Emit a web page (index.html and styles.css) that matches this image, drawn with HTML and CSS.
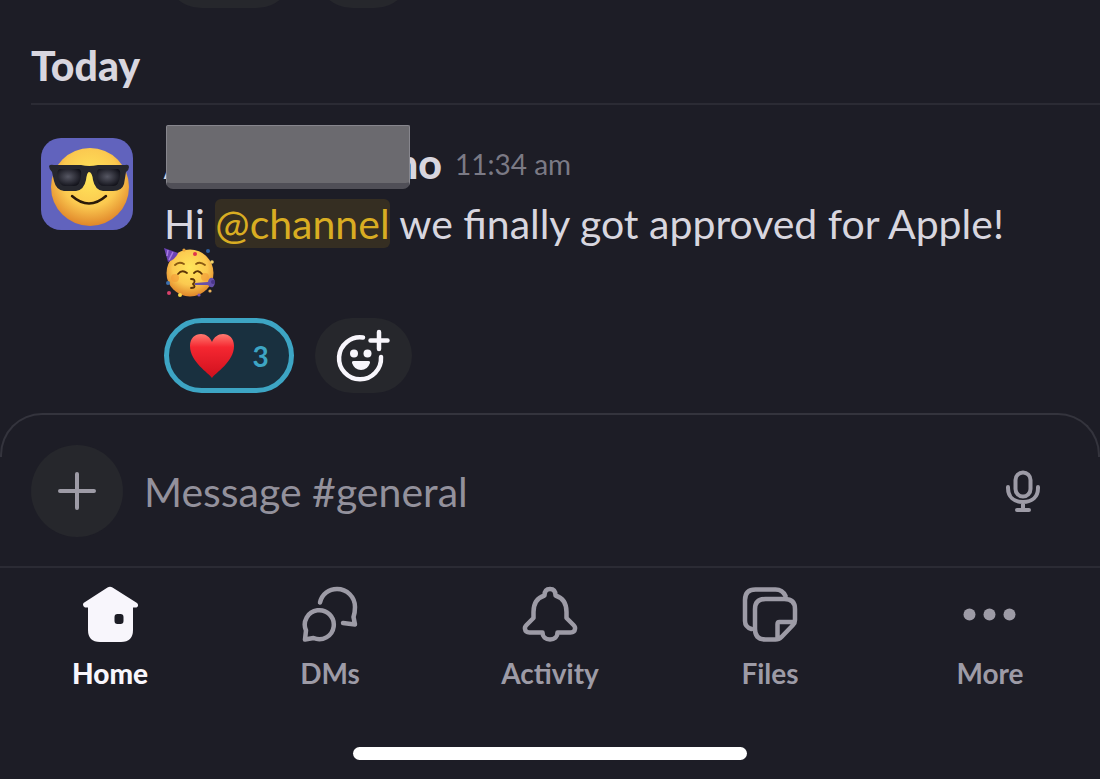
FILE: index.html
```html
<!DOCTYPE html>
<html lang="en">
  <head>
    <meta charset="UTF-8">
    <meta name="viewport" content="width=device-width, initial-scale=1">
    <title>#general</title>
    <link rel="stylesheet" href="styles.css">
  </head>
  <body>
    <main class="history">
      <div class="previous">
        <span class="pill pill-wide"></span>
        <span class="pill pill-add"></span>
      </div>

      <h2 class="day">Today</h2>

      <article class="message">
        <svg class="avatar" viewBox="0 0 92 92" role="img" aria-label="Avatar">
          <defs>
            <radialGradient id="face" cx="50%" cy="38%" r="62%">
              <stop offset="0" stop-color="#ffe65a"/>
              <stop offset="0.6" stop-color="#fbc950"/>
              <stop offset="1" stop-color="#e0862a"/>
            </radialGradient>
            <radialGradient id="lens" cx="45%" cy="45%" r="60%">
              <stop offset="0" stop-color="#565763"/>
              <stop offset="1" stop-color="#12121a"/>
            </radialGradient>
          </defs>
          <rect width="92" height="92" fill="#6163bd"/>
          <circle cx="49" cy="49" r="39" fill="url(#face)"/>
          <path d="M8 28 Q9 26 13 27 L40 27 Q48 29 57 27 L84 27 Q88 26 88 29 Q88 32 85 34 L83 46 Q81 53 72 53 L62 53 Q54 52 52 42 Q51 34 48 34 Q46 34 45 42 Q43 52 35 53 L23 53 Q15 52 13 43 L11 34 Q8 31 8 28 Z" fill="#26272e"/>
          <path d="M19 31 H38 Q41 32 40 38 Q39 48 33 48 H24 Q19 48 17 40 Q15 32 19 31 Z" fill="url(#lens)"/>
          <path d="M58 31 H77 Q80 32 79 38 Q78 48 72 48 H63 Q57 48 56 40 Q55 32 58 31 Z" fill="url(#lens)"/>
          <path d="M31 58 Q48 73 65 58" fill="none" stroke="#2b1a08" stroke-width="2.4" stroke-linecap="round"/>
        </svg>

        <div class="content">
          <header class="byline">
            <span class="author"><span>A</span><span>no</span><span class="redacted"></span></span>
            <time class="time">11:34 am</time>
          </header>

          <p class="text">Hi <a class="mention" href="#channel">@channel</a> we finally got approved for Apple!
            <svg class="emoji" viewBox="0 0 52 50" role="img" aria-label="Partying face">
              <circle cx="26" cy="25" r="23.5" fill="url(#face)"/>
              <path d="M0 0 L14 5 Q12 11 4 14 Z" fill="#6c43b5"/>
              <path d="M4 2 L3 8 M9 4 L5 12" stroke="#a77be0" stroke-width="1.5"/>
              <path d="M11 17 Q15 13 20 16 M32 16 Q36 13 41 17" fill="none" stroke="#8a5a12" stroke-width="1.8" stroke-linecap="round"/>
              <path d="M14 26 Q18 21 23 25 M30 25 Q34 21 38 26" fill="none" stroke="#5b3307" stroke-width="1.8" stroke-linecap="round"/>
              <circle cx="11" cy="30" r="4" fill="#f49a35" opacity="0.6"/>
              <circle cx="41" cy="29" r="4" fill="#f49a35" opacity="0.6"/>
              <path d="M27 31 Q32 31 30 35 Q28 36 30 37 Q32 40 27 40" fill="none" stroke="#5b3307" stroke-width="1.8" stroke-linecap="round"/>
              <path d="M31 35 L44 34 Q45 29 49 30 Q53 34 49 39 Q46 40 44 37 L31 37 Z" fill="#6650ab"/>
              <circle cx="49" cy="34" r="2" fill="#4a368a"/>
              <circle cx="20" cy="2" r="1.6" fill="#e8a33a"/>
              <circle cx="31" cy="6" r="2" fill="#e0344c"/>
              <circle cx="44" cy="3" r="2" fill="#2e5f9e"/>
              <circle cx="48" cy="14" r="1.8" fill="#f2d36b"/>
              <circle cx="4" cy="35" r="2" fill="#3c6fae"/>
              <circle cx="5" cy="45" r="2" fill="#d9416b"/>
              <circle cx="16" cy="47" r="2" fill="#f5d54a"/>
              <circle cx="35" cy="47" r="1.6" fill="#7a58b0"/>
              <circle cx="46" cy="43" r="1.6" fill="#eeb55c"/>
            </svg>
          </p>

          <div class="reactions">
            <button class="pill pill-wide pill-active" type="button" aria-label="Heart, 3 reactions">
              <svg class="heart" viewBox="0 0 46 46" aria-hidden="true">
                <defs>
                  <linearGradient id="heart" x1="0" y1="0" x2="0" y2="1">
                    <stop offset="0" stop-color="#ff7a70"/>
                    <stop offset="0.3" stop-color="#f52731"/>
                    <stop offset="1" stop-color="#cf101d"/>
                  </linearGradient>
                </defs>
                <path d="M23 45 C20 40 1 29 1 13 C1 5 6 1 12 1 C17 1 21 4 23 9 C25 4 29 1 34 1 C40 1 45 5 45 13 C45 29 26 40 23 45 Z" fill="url(#heart)"/>
              </svg>
              <span>3</span>
            </button>
            <button class="pill pill-add" type="button" aria-label="Add reaction">
              <svg class="icon" viewBox="0 0 56 56" aria-hidden="true">
                <path d="M27 9.500 A21 21 0 1 0 45 29 M43 4 V21 M34.500 12.500 H51.500" stroke-width="4.5"/>
                <circle class="fill" cx="18" cy="25.500" r="4"/>
                <circle class="fill" cx="31.500" cy="25.500" r="4"/>
                <path class="fill" d="M17.500 33 H32.500 Q34.500 33 34 35 Q31.500 42 25 42 Q18.500 42 16 35 Q15.500 33 17.500 33 Z"/>
              </svg>
            </button>
          </div>
        </div>
      </article>
    </main>

    <form class="composer">
      <button class="attach" type="button" aria-label="Attach">
        <svg class="icon" viewBox="0 0 56 56" aria-hidden="true">
          <path d="M28 11 V45 M11 28 H45" stroke-width="4"/>
        </svg>
      </button>
      <input class="field" type="text" aria-label="Message #general" placeholder="Message #general">
      <button class="mic" type="button" aria-label="Record audio">
        <svg class="icon" viewBox="0 0 56 56" aria-hidden="true">
          <rect x="20.500" y="9.500" width="15" height="24" rx="7.500" stroke-width="4"/>
          <path d="M13 24 V25 C13 34 19 39 28 39 C37 39 43 34 43 25 V24 M28 39 V46 M22 47 H34" stroke-width="4"/>
        </svg>
      </button>
    </form>

    <nav class="tabs">
      <a class="tab tab-active" href="#home">
        <svg class="icon" viewBox="0 0 56 56" aria-hidden="true">
          <path class="fill" fill-rule="evenodd" d="M25.500 1.500 Q28 0 30.500 1.500 L55 17 Q57.500 20 54.500 21.500 H51 V44 Q51 56 39 56 H18 Q6 56 6 44 V21.500 H3 Q0 20 1.500 17 Z M35.500 28 Q32.500 28 32.500 31 V35 Q32.500 38 35.500 38 H38.500 Q41.500 38 41.500 35 V31 Q41.500 28 38.500 28 Z"/>
        </svg>
        <span>Home</span>
      </a>
      <a class="tab" href="#dms">
        <svg class="icon" viewBox="0 0 56 56" aria-hidden="true">
          <path d="M18 16.500 C20 8 27 3 35 3 C45 3 53 11 53 21 C53 25 52.500 28 51.500 31 L53 38.500 L41 37"/>
          <path d="M3 53.500 L4 44.500 A14.500 14.500 0 1 1 11.500 52 Z"/>
        </svg>
        <span>DMs</span>
      </a>
      <a class="tab" href="#activity">
        <svg class="icon" viewBox="0 0 56 56" aria-hidden="true">
          <path d="M22.500 9.500 C22.500 5 24.500 3 28 3 C31.500 3 33.500 5 33.500 9.500 C41.500 12 44.500 18 44.500 26 V32 L51.500 39 Q53.500 41 53 43 Q52.500 46.500 48.500 46.500 H35.500 C35.500 51 32.500 53.500 28 53.500 C23.500 53.500 20.500 51 20.500 46.500 H7.500 Q3.500 46.500 3 43 Q2.500 41 4.500 39 L11.500 32 V26 C11.500 18 14.500 12 22.500 9.500 Z"/>
        </svg>
        <span>Activity</span>
      </a>
      <a class="tab" href="#files">
        <svg class="icon" viewBox="0 0 56 56" aria-hidden="true">
          <path d="M9.500 43 Q3 41 3 35 V14 Q3 3.500 13.500 3.500 H33.500 Q40.500 3.500 43.500 10"/>
          <path d="M23.500 13 H42.500 Q53 13 53 23 V34 Q53 37 51 39 L39.500 51 Q37 53.500 33.500 53.500 H23.500 Q13 53.500 13 43 V23 Q13 13 23.500 13 Z M52.500 36 H37.500 Q35.500 36 35.500 38 V53"/>
        </svg>
        <span>Files</span>
      </a>
      <a class="tab" href="#more">
        <svg class="icon" viewBox="0 0 56 56" aria-hidden="true">
          <circle class="fill" cx="7.500" cy="28.500" r="6"/>
          <circle class="fill" cx="27.500" cy="28.500" r="6"/>
          <circle class="fill" cx="47.500" cy="28.500" r="6"/>
        </svg>
        <span>More</span>
      </a>
    </nav>

    <div class="home-indicator"></div>
  </body>
</html>
```

FILE: styles.css
```css
* {
  box-sizing: border-box;
}

body {
  margin: 0;
  background: #1d1d26;
  color: #d8d6df;
  font-family: Lato, "Liberation Sans", sans-serif;
  font-size: 41px;
}

button {
  border: 0;
  padding: 0;
  color: inherit;
  font: inherit;
}

.icon {
  display: block;
  width: 56px;
  height: 56px;
  fill: none;
  stroke: currentColor;
  stroke-width: 4.5;
  stroke-linecap: round;
  stroke-linejoin: round;
}

.icon .fill {
  fill: currentColor;
  stroke: none;
}

/* bottom edge of the reactions on the message above */
.previous {
  display: flex;
  align-items: flex-end;
  gap: 21px;
  height: 8px;
  padding-left: 164px;
  overflow: hidden;
}

.day {
  margin: 33px 0 0 31px;
  padding-bottom: 12px;
  border-bottom: 2px solid #2b2b34;
  font-size: 41px;
  font-weight: 900;
  line-height: 50px;
}

.message {
  display: flex;
  gap: 31px;
  padding: 33px 41px 20px;
}

.avatar {
  flex: none;
  width: 92px;
  height: 92px;
  border-radius: 20px;
}

.content {
  flex: 1;
  min-width: 0;
}

.byline {
  display: flex;
  align-items: center;
  gap: 13px;
  padding-top: 2px;
  line-height: 48px;
}

.author {
  position: relative;
  display: flex;
  justify-content: space-between;
  width: 278px;
  font-weight: 900;
}

/* grey block over the name, with a darker bevel along the bottom */
.redacted {
  position: absolute;
  top: -15px;
  left: 2px;
  width: 244px;
  height: 64px;
  border: 1px solid #87868d;
  border-bottom: 6px solid #504f57;
  border-radius: 2px 2px 7px 7px;
  background: #6b6a6f;
}

.time {
  color: #7b7a85;
  font-size: 28px;
}

.text {
  margin: 12px 0 0;
  line-height: 48px;
}

.mention {
  border-radius: 6px;
  background: #352e22;
  color: #d9ad22;
  text-decoration: none;
}

.emoji {
  display: block;
  width: 52px;
  height: 50px;
}

.reactions {
  display: flex;
  gap: 21px;
  margin-top: 20px;
}

.pill {
  display: flex;
  flex: none;
  align-items: center;
  justify-content: center;
  height: 75px;
  border-radius: 38px;
  background: #26272c;
}

.pill-wide {
  width: 130px;
}

.pill-add {
  width: 97px;
  color: #f8f6fc;
}

.pill-active {
  gap: 17px;
  border: 5px solid #3da5c4;
  background: #19303f;
  color: #3da5c4;
  font-size: 28px;
  font-weight: bold;
}

.heart {
  width: 46px;
  height: 46px;
}

.composer {
  position: relative;
  display: flex;
  align-items: center;
  gap: 21px;
  padding: 32px 31px 29px;
}

.composer::before {
  content: "";
  position: absolute;
  inset: 0 0 auto;
  height: 42px;
  border: 2px solid #34343d;
  border-bottom: 0;
  border-radius: 42px 42px 0 0;
  pointer-events: none;
}

.attach {
  display: flex;
  flex: none;
  align-items: center;
  justify-content: center;
  width: 92px;
  height: 92px;
  border-radius: 50%;
  background: #26272c;
  color: #9d9ba6;
}

.field {
  flex: 1;
  min-width: 0;
  padding: 0;
  border: 0;
  outline: 0;
  background: none;
  color: inherit;
  font: inherit;
}

.field::placeholder {
  color: #93919c;
  opacity: 1;
}

.mic {
  flex: none;
  margin-right: 18px;
  background: none;
  color: #9d9ba6;
}

.tabs {
  display: grid;
  grid-template-columns: repeat(5, 1fr);
  padding-top: 18px;
  border-top: 2px solid #2b2b34;
}

.tab {
  display: flex;
  flex-direction: column;
  align-items: center;
  gap: 14px;
  color: #9d9ba6;
  font-size: 28px;
  font-weight: bold;
  line-height: 34px;
  text-decoration: none;
}

.tab-active {
  color: #f8f6fc;
  font-weight: 900;
}

.home-indicator {
  width: 394px;
  max-width: 60%;
  height: 13px;
  margin: 57px auto 18px;
  border-radius: 7px;
  background: #fff;
}
```
